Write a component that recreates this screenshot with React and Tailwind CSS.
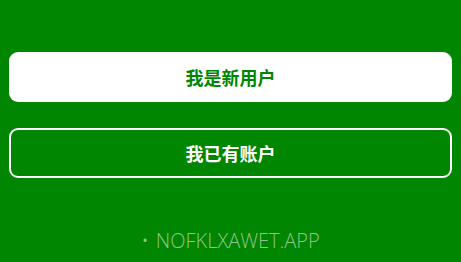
export default function App() {
  return (
    <div className="w-[461px] h-[262px] bg-[#008600] flex flex-col px-[9px] pt-[52px]" style={{ fontFamily: '"Noto Sans CJK SC", sans-serif' }}>
      <button className="h-[50px] w-full rounded-[9px] bg-white text-[#008600] text-[18px] font-bold flex items-center justify-center">
        我是新用户
      </button>
      <button className="mt-[26px] h-[50px] w-full rounded-[9px] border-2 border-white text-white text-[18px] font-bold flex items-center justify-center">
        我已有账户
      </button>
      <div className="mt-[53px] flex items-center justify-center text-[#8ec48e] text-[20px] font-light leading-none" style={{ fontFamily: '"Open Sans", sans-serif' }}>
        <span className="mr-[7px] text-[20px]">•</span>
        <span>NOFKLXAWET.APP</span>
      </div>
    </div>
  );
}
